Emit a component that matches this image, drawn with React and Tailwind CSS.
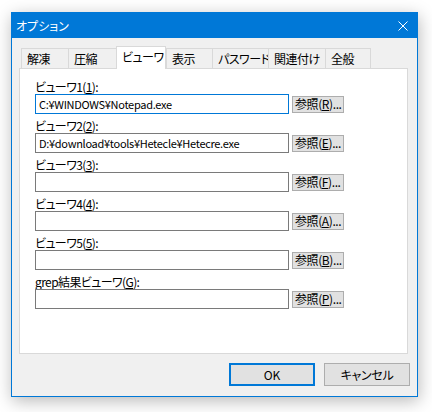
import React from "react";

const font = "[font-family:'Noto_Sans_CJK_JP','Noto_Sans',sans-serif] [font-feature-settings:'palt']";

function Tab({ label, w, selected }) {
  if (selected) {
    return (
      <div
        className="relative z-10 -mb-px h-[23px] bg-white border-t border-l border-r border-[#d9d9d9] flex items-start pt-[3px] pl-[5px] text-[12px] leading-[14px] text-black whitespace-nowrap tracking-[-0.5px]"
        style={{ width: w }}
      >
        {label}
      </div>
    );
  }
  return (
    <div
      className="h-[20px] bg-[#f0f0f0] border-t border-l border-[#d9d9d9] last:border-r flex items-center pl-[5px] pt-[1px] text-[12px] leading-[14px] text-black whitespace-nowrap tracking-[-0.5px]"
      style={{ width: w }}
    >
      {label}
    </div>
  );
}

function Row({ label, value, keyChar, focused }) {
  return (
    <div className="flex flex-col">
      <div className="h-[14px] text-[12px] leading-[14px] text-black whitespace-nowrap tracking-[-0.6px]">{label}</div>
      <div className="flex items-center h-[20px]">
        <div
          className={`w-[254px] h-[20px] border bg-white flex items-center pl-[3px] text-[11px] leading-[14px] tracking-[-0.3px] text-black whitespace-nowrap overflow-hidden ${
            focused ? "border-[#0078d7]" : "border-[#7a7a7a]"
          }`}
        >
          {value}
        </div>
        <div className="ml-[3px] w-[52px] h-[17px] border border-[#adadad] bg-[#e1e1e1] flex items-center pl-[2px] text-[12px] leading-[14px] text-black whitespace-nowrap tracking-[-0.4px]">
          参照(<span className="underline underline-offset-1">{keyChar}</span>)...
        </div>
      </div>
    </div>
  );
}

export default function App() {
  return (
    <div className={`w-[432px] h-[412px] bg-white pl-[11px] pt-[12px] ${font}`}>
      <div className="w-[407px] h-[385px] border border-[#0078d7] bg-[#f0f0f0] shadow-[1px_4px_16px_rgba(0,0,0,0.28)] flex flex-col">
        <div className="h-[25px] bg-[#0078d7] flex items-center justify-between pl-[4px] pr-[9px] text-white text-[12px] leading-[14px]">
          <span>オプション</span>
          <svg width="10" height="10" viewBox="0 0 10 10">
            <path d="M0.5 0.5 L9.5 9.5 M9.5 0.5 L0.5 9.5" stroke="white" strokeWidth="1" fill="none" />
          </svg>
        </div>
        <div className="flex flex-col pl-[7px] pt-[8px]">
          <div className="flex items-end h-[22px] pl-[2px]">
            <Tab label="解凍" w={47} />
            <Tab label="圧縮" w={48} />
            <Tab label="ビューワ" w={50} selected />
            <Tab label="表示" w={46} />
            <Tab label="パスワード" w={56} />
            <Tab label="関連付け" w={57} />
            <Tab label="全般" w={46} />
          </div>
          <div className="w-[389px] h-[286px] bg-white border border-[#d9d9d9] pt-[11px] pl-[15px] flex flex-col gap-[5px]">
            <Row
              label={<>ビューワ1(<span className="underline underline-offset-1">1</span>):</>}
              value="C:¥WINDOWS¥Notepad.exe"
              keyChar="R"
              focused
            />
            <Row
              label={<>ビューワ2(<span className="underline underline-offset-1">2</span>):</>}
              value="D:¥download¥tools¥Hetecle¥Hetecre.exe"
              keyChar="E"
            />
            <Row label={<>ビューワ3(<span className="underline underline-offset-1">3</span>):</>} value="" keyChar="F" />
            <Row label={<>ビューワ4(<span className="underline underline-offset-1">4</span>):</>} value="" keyChar="A" />
            <Row label={<>ビューワ5(<span className="underline underline-offset-1">5</span>):</>} value="" keyChar="B" />
            <Row label={<>grep結果ビューワ(<span className="underline underline-offset-1">G</span>):</>} value="" keyChar="P" />
          </div>
          <div className="flex justify-end gap-[9px] pr-[7px] mt-[9px]">
            <div className="w-[86px] h-[23px] border-2 border-[#0078d7] bg-[#e1e1e1] flex items-center justify-center text-[12px] leading-[14px] text-black">
              OK
            </div>
            <div className="w-[86px] h-[23px] border border-[#adadad] bg-[#e1e1e1] flex items-center justify-center text-[12px] leading-[14px] text-black tracking-[-0.3px]">
              キャンセル
            </div>
          </div>
        </div>
      </div>
    </div>
  );
}
